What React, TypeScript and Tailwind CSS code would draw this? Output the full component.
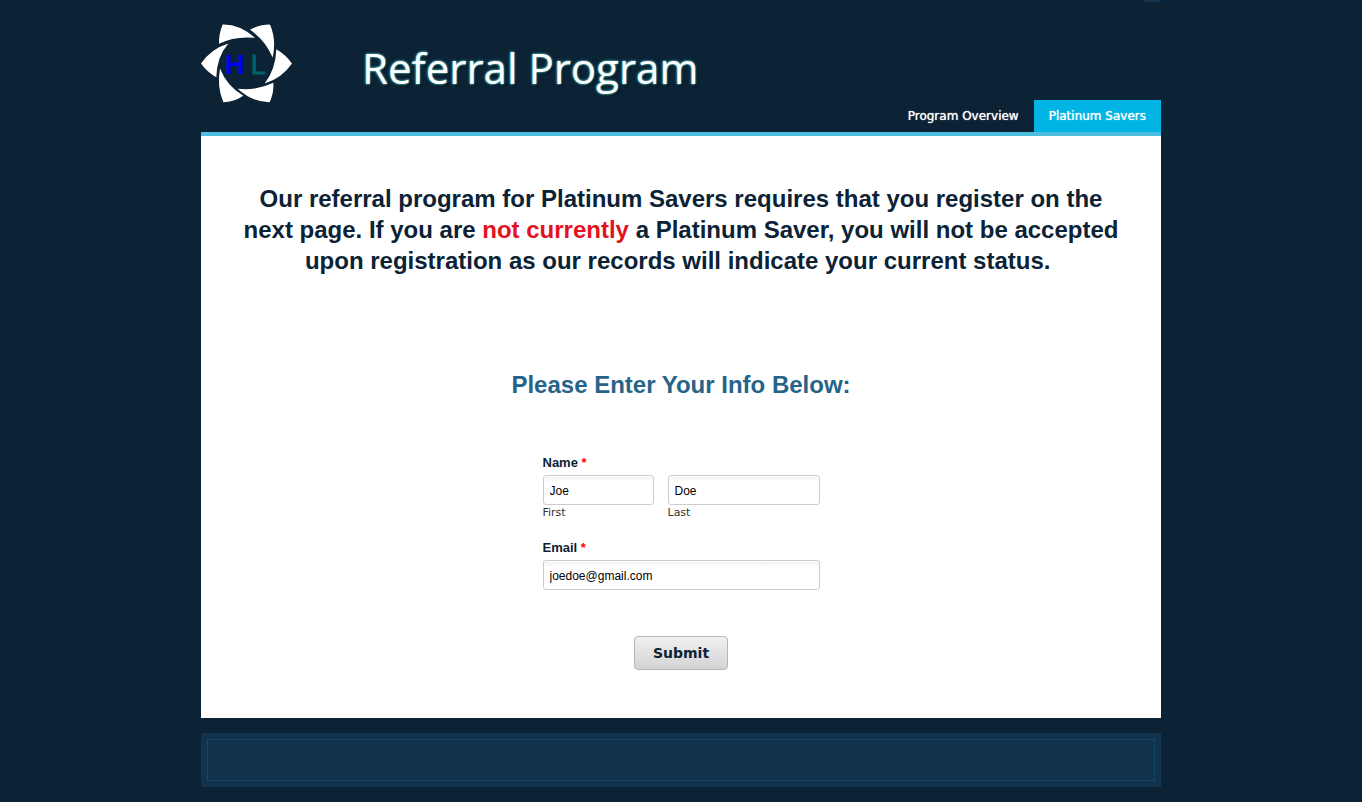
import React from "react";

function Logo() {
  return (
    <svg viewBox="33 29 273 236" className="h-[79px] w-[91px]" role="img" aria-label="HL">
      <g fill="#fff">
        <path d="M98 30Q150 29 195 70Q134 64 87 88Q86 58 98 30Z" />
        <path d="M180 46Q208 30 240 30Q260 76 248 129Q225 76 180 46Z" />
        <path d="M259 104Q287 120 306 147Q276 191 224 207Q257 164 259 104Z" />
        <path d="M250 205Q252 236 239 263Q188 264 143 223Q200 229 250 205Z" />
        <path d="M90 162Q110 214 160 244Q132 263 100 263Q80 216 90 162Z" />
        <path d="M115 87Q80 128 79 188Q52 174 33 147Q63 103 115 87Z" />
      </g>
      <text x="105" y="178" fontFamily="Liberation Sans" fontWeight="700" fontSize="81" fill="#00f">H</text>
      <text x="182" y="178" fontFamily="Liberation Sans" fontWeight="400" fontSize="81" fill="#006066" stroke="#006066" strokeWidth="3">L</text>
    </svg>
  );
}

const inputClass =
  "h-[30px] w-full rounded-[3px] border border-[#ccc] bg-linear-to-b from-[#eee] to-white to-20% px-1.5 pt-0.5 font-['Liberation_Sans',sans-serif] text-[12px] text-black shadow-[inset_0_1px_0_#fff]";

const labelClass = "block font-['Liberation_Sans',sans-serif] text-[13px] leading-5 font-bold";

export default function App() {
  return (
    <div className="min-h-screen bg-[#0c2235] font-['DejaVu_Sans',sans-serif] text-[#0c2235]">
      <div className="mx-auto max-w-[960px]">
        <div className="flex justify-end">
          <div className="h-0.5 w-[18px] bg-[#11334d]" />
        </div>
        <header className="flex h-[134px] items-start justify-between border-b-4 border-[#4cbfe0]">
          <div className="flex pt-[22px]">
            <Logo />
            <h1 className="pt-2 pl-[70px] font-['Open_Sans',sans-serif] text-[42px] leading-[72px] font-medium whitespace-nowrap text-white [text-shadow:0_0_2px_#4fc4c0,0_0_3px_#3aa5a5,2px_2px_2px_#05101a]">
              Referral Program
            </h1>
          </div>
          <nav className="flex self-end text-[12px] leading-8 whitespace-nowrap text-white">
            <a href="#overview" className="px-[15px] [text-shadow:0_0_1px_#fff]">Program Overview</a>
            <a href="#platinum" className="bg-[#00b5e5] px-[15px] [text-shadow:0_0_1px_#fff]">Platinum Savers</a>
          </nav>
        </header>
        <main className="bg-white px-10 pt-[47px] pb-12">
          <p className="text-center font-['Liberation_Sans',sans-serif] text-[24px] leading-[31px] font-bold">
            Our referral program for Platinum Savers requires that you register on the next page. If you are{" "}
            <span className="text-[#e31220]">not currently</span> a Platinum Saver, you will not be accepted upon
            registration as our records will indicate your current status.&nbsp;
          </p>
          <h2 className="mt-[93px] text-center font-['Liberation_Sans',sans-serif] text-[24px] leading-[31px] font-bold text-[#256488]">
            Please Enter Your Info Below:
          </h2>
          <form className="mx-auto mt-[53px] max-w-[277px]" onSubmit={(e) => e.preventDefault()}>
            <fieldset>
              <legend className={labelClass}>
                Name <span className="text-[#f00]">*</span>
              </legend>
              <div className="mt-[2px] flex gap-[14px]">
                <div className="w-[111px]">
                  <input id="first" defaultValue="Joe" className={inputClass} />
                  <label htmlFor="first" className="block text-[11px] leading-4 text-[#333]">First</label>
                </div>
                <div className="flex-1">
                  <input id="last" defaultValue="Doe" className={inputClass} />
                  <label htmlFor="last" className="block text-[11px] leading-4 text-[#333]">Last</label>
                </div>
              </div>
            </fieldset>
            <div className="mt-[17px]">
              <label htmlFor="email" className={labelClass}>
                Email <span className="text-[#f00]">*</span>
              </label>
              <input id="email" type="email" defaultValue="joedoe@gmail.com" className={`mt-[2px] ${inputClass}`} />
            </div>
            <div className="mt-[46px] flex justify-center">
              <button
                type="submit"
                className="h-[34px] rounded-[4px] border border-[#b5b5b5] bg-linear-to-b from-[#f0f0f0] to-[#d4d4d4] px-[18px] text-[14px] font-bold"
              >
                Submit
              </button>
            </div>
          </form>
        </main>
        <footer className="mt-[15px] bg-[#11334d] p-1.5">
          <div className="h-[42px] border border-[#17466b]" />
        </footer>
      </div>
    </div>
  );
}
